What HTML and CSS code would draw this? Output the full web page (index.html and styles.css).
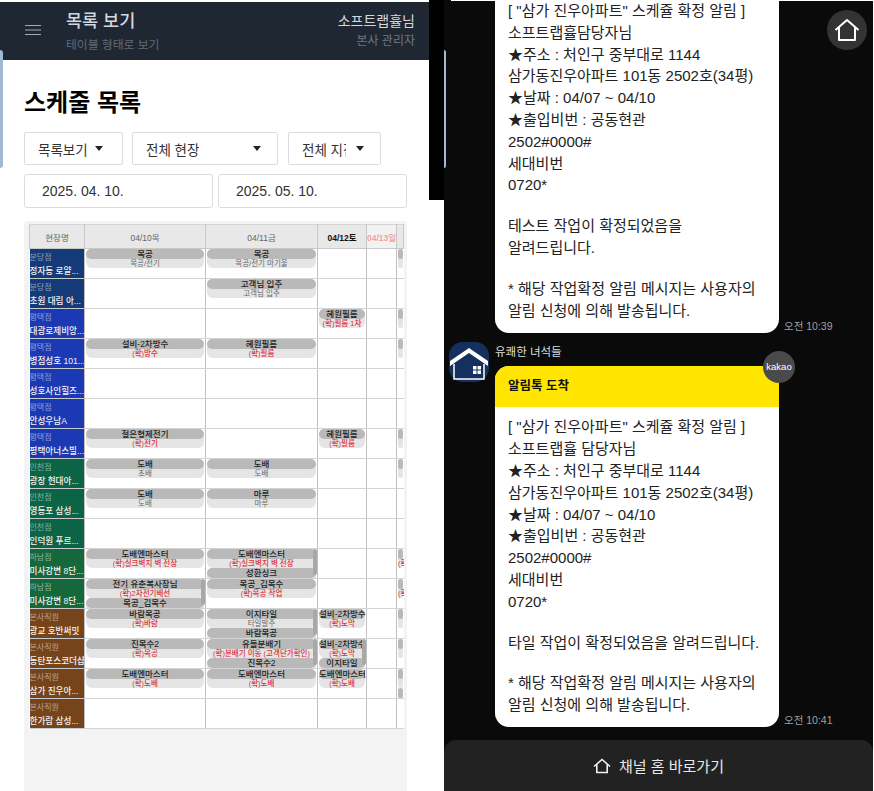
FILE: index.html
```html
<!DOCTYPE html>
<html lang="ko">
<head>
    <meta charset="UTF-8">
    <title>스케줄 목록</title>
    <link rel="stylesheet" href="styles.css">
</head>
<body>
    <div class="app">
        <span class="edge-bar"></span>
        <header class="top">
            <svg class="menu" width="16" height="10" viewBox="0 0 16 10"><path d="M0 .5h16M0 5h16M0 9.500h16" stroke="#a4abb6" stroke-width="1.200" fill="none"/></svg>
            <div class="top-title">
                <h1>목록 보기</h1>
                <p>테이블 형태로 보기</p>
            </div>
            <div class="top-user">
                <h2>소프트랩휼님</h2>
                <p>본사 관리자</p>
            </div>
        </header>
        <main class="content">
            <h2 class="page-title">스케줄 목록</h2>
            <div class="filters">
                <div class="select s1"><span>목록보기</span><i></i></div>
                <div class="select s2"><span>전체 현장</span><i></i></div>
                <div class="select s3"><span>전체 지점</span><i></i></div>
            </div>
            <div class="dates">
                <div class="date">2025. 04. 10.</div>
                <div class="date">2025. 05. 10.</div>
            </div>
            <div class="sheet">
                <table class="grid">
                    <colgroup><col class="c-name"><col class="c-a"><col class="c-b"><col class="c-c"><col class="c-d"><col class="c-e"></colgroup>
                    <thead>
                        <tr><th>현장명</th><th>04/10목</th><th>04/11금</th><th class="sat">04/12토</th><th class="sun">04/13일</th><th></th></tr>
                    </thead>
                    <tbody>
                        <tr>
                            <td class="site navy"><small>분당점</small><strong>정자동 로얄...</strong></td>
                            <td><div class="slot"><div class="ev"><b>목공</b><span>목공/전기</span></div></div></td>
                            <td><div class="slot"><div class="ev"><b>목공</b><span>목공/전기 마기울</span></div></div></td>
                            <td></td><td></td>
                            <td><div class="slot"><div class="ev"><b>&nbsp;</b><span>&nbsp;</span></div></div></td>
                        </tr>
                        <tr>
                            <td class="site navy"><small>분당점</small><strong>초원 대림 아...</strong></td>
                            <td></td>
                            <td><div class="slot"><div class="ev"><b>고객님 입주</b><span>고객님 입주</span></div></div></td>
                            <td></td><td></td><td></td>
                        </tr>
                        <tr>
                            <td class="site blue"><small>평택점</small><strong>대광로제비앙...</strong></td>
                            <td></td><td></td>
                            <td><div class="slot"><div class="ev"><b>혜원필름</b><span class="ok">(확)필름 1차</span></div></div></td>
                            <td></td>
                            <td><div class="slot"><div class="ev"><b>&nbsp;</b><span>&nbsp;</span></div></div></td>
                        </tr>
                        <tr>
                            <td class="site blue"><small>평택점</small><strong>병점성호 101...</strong></td>
                            <td><div class="slot"><div class="ev"><b>설비-2차방수</b><span class="ok">(확)방수</span></div></div></td>
                            <td><div class="slot"><div class="ev"><b>혜원필름</b><span class="ok">(확)필름</span></div></div></td>
                            <td></td><td></td>
                            <td><div class="slot"><div class="ev"><b>&nbsp;</b><span>&nbsp;</span></div></div></td>
                        </tr>
                        <tr>
                            <td class="site blue"><small>평택점</small><strong>성호사인힐즈...</strong></td>
                            <td></td><td></td><td></td><td></td><td></td>
                        </tr>
                        <tr>
                            <td class="site blue"><small>평택점</small><strong>안성우남A</strong></td>
                            <td></td><td></td><td></td><td></td><td></td>
                        </tr>
                        <tr>
                            <td class="site blue"><small>평택점</small><strong>평택아너스빌...</strong></td>
                            <td><div class="slot"><div class="ev"><b>절은형제전기</b><span class="ok">(확)전기</span></div></div></td>
                            <td></td>
                            <td><div class="slot"><div class="ev"><b>혜원필름</b><span class="ok">(확)필름</span></div></div></td>
                            <td></td>
                            <td><div class="slot"><div class="ev"><b>&nbsp;</b><span>&nbsp;</span></div></div></td>
                        </tr>
                        <tr>
                            <td class="site green"><small>인천점</small><strong>광장 현대아...</strong></td>
                            <td><div class="slot"><div class="ev"><b>도배</b><span>초배</span></div></div></td>
                            <td><div class="slot"><div class="ev"><b>도배</b><span>도배</span></div></div></td>
                            <td></td><td></td>
                            <td><div class="slot"><div class="ev"><b>&nbsp;</b><span>&nbsp;</span></div></div></td>
                        </tr>
                        <tr>
                            <td class="site green"><small>인천점</small><strong>영등포 삼성...</strong></td>
                            <td><div class="slot"><div class="ev"><b>도배</b><span>도배</span></div></div></td>
                            <td><div class="slot"><div class="ev"><b>마루</b><span>마루</span></div></div></td>
                            <td></td><td></td><td></td>
                        </tr>
                        <tr>
                            <td class="site green"><small>인천점</small><strong>인덕원 푸르...</strong></td>
                            <td></td><td></td><td></td><td></td><td></td>
                        </tr>
                        <tr>
                            <td class="site forest"><small>하남점</small><strong>미사강변 8단...</strong></td>
                            <td><div class="slot"><div class="ev"><b>도배엔마스터</b><span class="ok">(확)실크벽지 벽 전장</span></div></div></td>
                            <td><div class="slot more"><div class="ev"><b>도배엔마스터</b><span class="ok">(확)실크벽지 벽 전장</span></div><div class="ev"><b>성환싱크</b><span>&nbsp;</span></div></div></td>
                            <td></td><td></td>
                            <td><div class="slot"><div class="ev"><b>&nbsp;</b><span class="ok">(확)</span></div></div></td>
                        </tr>
                        <tr>
                            <td class="site forest"><small>하남점</small><strong>미사강변 8단...</strong></td>
                            <td><div class="slot more"><div class="ev"><b>전기 유춘복사장님</b><span class="ok">(확)2차전기배선</span></div><div class="ev"><b>목공_김목수</b><span>&nbsp;</span></div></div></td>
                            <td><div class="slot"><div class="ev"><b>목공_김목수</b><span class="ok">(확)목공 작업</span></div></div></td>
                            <td></td><td></td>
                            <td><div class="slot"><div class="ev"><b>&nbsp;</b><span class="ok">(확)</span></div></div></td>
                        </tr>
                        <tr>
                            <td class="site brown"><small>본사직원</small><strong>광교 호반써밋</strong></td>
                            <td><div class="slot"><div class="ev"><b>바람목공</b><span class="ok">(확)바람</span></div></div></td>
                            <td><div class="slot more"><div class="ev"><b>이지타일</b><span>타일발주</span></div><div class="ev"><b>바람목공</b><span>&nbsp;</span></div></div></td>
                            <td><div class="slot"><div class="ev"><b>설비-2차방수</b><span class="ok">(확)도막</span></div></div></td>
                            <td></td>
                            <td><div class="slot"><div class="ev"><b>&nbsp;</b><span>&nbsp;</span></div></div></td>
                        </tr>
                        <tr>
                            <td class="site brown"><small>본사직원</small><strong>동탄포스코더샵</strong></td>
                            <td><div class="slot"><div class="ev"><b>진목수2</b><span class="ok">(확)목공</span></div></div></td>
                            <td><div class="slot more"><div class="ev"><b>유들분배기</b><span class="ok">(확)분배기 이동 (고객단가확인)</span></div><div class="ev"><b>진목수2</b><span>&nbsp;</span></div></div></td>
                            <td><div class="slot more"><div class="ev"><b>설비-2차방수</b><span class="ok">(확)도막</span></div><div class="ev"><b>이지타일</b><span>&nbsp;</span></div></div></td>
                            <td></td>
                            <td><div class="slot"><div class="ev"><b>&nbsp;</b><span>&nbsp;</span></div></div></td>
                        </tr>
                        <tr>
                            <td class="site brown"><small>본사직원</small><strong>삼가 진우아...</strong></td>
                            <td><div class="slot"><div class="ev"><b>도배엔마스터</b><span class="ok">(확)도배</span></div></div></td>
                            <td><div class="slot"><div class="ev"><b>도배엔마스터</b><span class="ok">(확)도배</span></div></div></td>
                            <td><div class="slot"><div class="ev"><b>도배엔마스터</b><span class="ok">(확)도배</span></div></div></td>
                            <td></td>
                            <td><div class="slot"><div class="ev"><b>&nbsp;</b><span>&nbsp;</span></div><div class="ev"><b>&nbsp;</b><span>&nbsp;</span></div></div></td>
                        </tr>
                        <tr>
                            <td class="site brown"><small>본사직원</small><strong>한가람 삼성...</strong></td>
                            <td></td><td></td><td></td><td></td><td></td>
                        </tr>
                    </tbody>
                </table>
            </div>
        </main>
    </div>

    <div class="gutter"><div class="gutter-black"></div></div>

    <div class="chat">
        <span class="edge-bar thin"></span>
        <div class="chat-topline"></div>
        <button class="home-btn">
            <svg width="26" height="24" viewBox="0 0 26 24"><path d="M1.500 12 13 2l11.500 10M5 9.500V22h16V9.500" fill="none" stroke="#fff" stroke-width="2" stroke-linejoin="round"/></svg>
        </button>
        <div class="msg first">
            <div class="bubble">
                <div class="bubble-body">
                    <p>[ "삼가 진우아파트" 스케쥴 확정 알림 ]<br>소프트랩휼담당자님<br>★주소 : 처인구 중부대로 1144<br>삼가동진우아파트 101동 2502호(34평)<br>★날짜 : 04/07 ~ 04/10<br>★출입비번 : 공동현관<br>2502#0000#<br>세대비번<br>0720*</p>
                    <p>테스트 작업이 확정되었음을<br>알려드립니다.</p>
                    <p>* 해당 작업확정 알림 메시지는 사용자의<br>알림 신청에 의해 발송됩니다.</p>
                </div>
            </div>
            <time>오전 10:39</time>
        </div>
        <div class="sender">
            <svg class="avatar" width="40" height="40" viewBox="0 0 40 40">
                <rect width="40" height="40" rx="14" fill="#15305f"/>
                <path d="M1 19 20 6l19 13v5L20 11 1 24z" fill="#fff"/>
                <path d="M5 22v15h30V22" fill="none" stroke="#fff" stroke-width="1.500"/>
                <path d="M24 24h8v8h-8z" fill="#fff"/>
                <path d="M28 24v8M24 28h8" stroke="#15305f"/>
            </svg>
            <span>유쾌한 녀석들</span>
        </div>
        <div class="msg second">
            <div class="bubble">
                <div class="bubble-head">알림톡 도착</div>
                <span class="kakao">kakao</span>
                <div class="bubble-body">
                    <p>[ "삼가 진우아파트" 스케쥴 확정 알림 ]<br>소프트랩휼 담당자님<br>★주소 : 처인구 중부대로 1144<br>삼가동진우아파트 101동 2502호(34평)<br>★날짜 : 04/07 ~ 04/10<br>★출입비번 : 공동현관<br>2502#0000#<br>세대비번<br>0720*</p>
                    <p>타일 작업이 확정되었음을 알려드립니다.</p>
                    <p>* 해당 작업확정 알림 메시지는 사용자의<br>알림 신청에 의해 발송됩니다.</p>
                </div>
            </div>
            <time>오전 10:41</time>
        </div>
        <div class="channel-bar">
            <svg width="18" height="16" viewBox="0 0 18 16"><path d="M1 8.500 9 1.500l8 7M3.800 6.500V14.500h10.400V6.500" fill="none" stroke="#f0f0f0" stroke-width="1.600"/></svg>
            <span>채널 홈 바로가기</span>
        </div>
    </div>
</body>
</html>
```

FILE: styles.css
```css
*{
    box-sizing : border-box;
}
html, body{
    margin : 0;
    height : 100%;
}
body{
    display : flex;
    height : 791px;
    overflow : hidden;
    background : #fff;
    font-family : "Liberation Sans", "Noto Sans CJK KR", sans-serif;
}
h1, h2, p{
    margin : 0;
}

/* left phone */
.app{
    position : relative;
    width : 429px;
    height : 791px;
    padding-top : 2px;
    display : flex;
    flex-direction : column;
    background : #fff;
}
.edge-bar{
    position : absolute;
    left : 0;
    top : 50px;
    width : 3px;
    height : 118px;
    background : #a3b8d3;
    border-radius : 0 3px 3px 0;
}
.edge-bar.thin{
    top : 50px;
    width : 2px;
    background : #a3b8d3;
}
.top{
    height : 58px;
    flex : none;
    display : flex;
    align-items : flex-start;
    padding : 0 14px 0 25px;
    background : #1f2733;
}
.menu{
    margin-top : 23px;
    margin-right : 25px;
}
.top-title{
    flex : 1;
    padding-top : 7px;
}
.top-title h1{
    font-size : 17.500px;
    font-weight : 500;
    line-height : 24px;
    color : #d3d8df;
}
.top-title p{
    font-size : 11.800px;
    line-height : 18px;
    margin-top : 3px;
    color : #626b78;
}
.top-user{
    text-align : right;
    padding-top : 10px;
}
.top-user h2{
    font-size : 14px;
    font-weight : 400;
    line-height : 19px;
    color : #d3d8df;
}
.top-user p{
    font-size : 12px;
    line-height : 16px;
    margin-top : 2px;
    color : #6f7885;
}
.content{
    flex : 1;
    min-height : 0;
    display : flex;
    flex-direction : column;
    padding : 26px 22px 0 24px;
}
.page-title{
    font-size : 24px;
    font-weight : 700;
    line-height : 34px;
    color : #000;
}
.filters{
    display : flex;
    margin-top : 12px;
}
.select{
    height : 33px;
    display : flex;
    align-items : center;
    border : 1px solid #dcdcdc;
    border-radius : 2px;
    font-size : 13.500px;
    color : #333;
}
.select span{
    white-space : nowrap;
    overflow : hidden;
}
.select i{
    width : 0;
    height : 0;
    margin-left : auto;
    border-left : 4.500px solid transparent;
    border-right : 4.500px solid transparent;
    border-top : 5px solid #222;
}
.s1{
    width : 99px;
    padding : 0 19px 0 13px;
}
.s2{
    width : 146px;
    margin-left : 9px;
    padding : 0 16px 0 13px;
}
.s3{
    width : 93px;
    margin-left : 10px;
    padding : 0 16px 0 13px;
}
.s3 span{
    width : 44px;
}
.dates{
    display : flex;
    gap : 5px;
    margin-top : 9px;
}
.date{
    width : 189px;
    height : 34px;
    line-height : 32px;
    padding-left : 17px;
    border : 1px solid #dcdcdc;
    border-radius : 3px;
    font-size : 14px;
    color : #333;
}
.sheet{
    flex : 1;
    margin-top : 13px;
    padding : 3px 0 0 5px;
    background : #f3f3f3;
    border-radius : 4px 4px 0 0;
}

/* schedule table */
.grid{
    width : 374px;
    table-layout : fixed;
    border-collapse : collapse;
    background : #fff;
}
.c-name{ width : 55px; }
.c-a{ width : 121px; }
.c-b{ width : 112px; }
.c-c{ width : 49px; }
.c-d{ width : 30px; }
.c-e{ width : 7px; }
.grid th{
    height : 24px;
    padding : 0;
    background : #e8e8e8;
    border : 1px solid #c8c8c8;
    border-top : 1px solid #d4d4d4;
    font-size : 8.500px;
    font-weight : 400;
    color : #666;
    white-space : nowrap;
    overflow : hidden;
}
.grid th.sat{
    font-weight : 700;
    color : #111;
}
.grid th.sun{
    font-weight : 700;
    color : #f2a3a0;
    background : #f2f2f2;
}
.grid td{
    height : 30px;
    padding : 0;
    vertical-align : top;
    border-right : 1px solid #c0c0c0;
    border-bottom : 1px solid #d4d4d4;
    border-left : 1px solid #c0c0c0;
}
.grid td:last-child{
    border-right : 0;
}
.site{
    overflow : hidden;
    white-space : nowrap;
}
.grid td.site{
    border-left : 0;
    border-bottom : 1px solid #c8ccd0;
}
.site small{
    display : block;
    font-size : 8px;
    line-height : 10px;
    padding-top : 4px;
    color : rgba(255,255,255,.5);
}
.site strong{
    display : block;
    font-size : 8.600px;
    font-weight : 500;
    line-height : 12px;
    margin-top : 2px;
    color : #f2f2f2;
}
.navy{ background : #143b78; }
.blue{ background : #1a39b2; }
.green{ background : #0a6445; }
.forest{ background : #15683c; }
.brown{ background : #75441a; }
.slot{
    position : relative;
    height : 29px;
    overflow : hidden;
}
.slot.more::after{
    content : "";
    position : absolute;
    top : 0;
    right : 0;
    width : 4px;
    height : 26px;
    background : #a8a8a8;
    border-radius : 2px;
}
.ev{
    height : 19px;
    margin : 0 1px;
    background : #e5e5e5;
    border-radius : 6px;
    text-align : center;
    white-space : nowrap;
}
.ev b{
    display : block;
    height : 10px;
    background : #b9b9b9;
    border-radius : 6px;
    font-size : 8.500px;
    font-weight : 500;
    line-height : 10px;
    color : #1c1c1c;
}
.ev span{
    display : block;
    height : 9px;
    font-size : 7.500px;
    line-height : 9px;
    color : #6a6a6a;
}
.ev span.ok{
    font-weight : 500;
    color : #e02f3b;
}

/* between the two phones */
.gutter{
    width : 15px;
    flex : none;
    background : #fff;
}
.gutter-black{
    height : 200px;
    background : #000;
}

/* chat phone */
.chat{
    position : relative;
    width : 429px;
    height : 791px;
    flex : none;
    display : flex;
    flex-direction : column;
    background : #0a0a0a;
}
.chat-topline{
    position : relative;
    z-index : 1;
    height : 1px;
    margin-left : 7px;
    background : #fff;
    flex : none;
}
.home-btn{
    position : absolute;
    right : 6px;
    top : 10px;
    width : 40px;
    height : 40px;
    padding : 0;
    border : 0;
    border-radius : 50%;
    display : flex;
    align-items : center;
    justify-content : center;
    background : #333;
}
.msg{
    display : flex;
    align-items : flex-end;
    padding-left : 51px;
}
.msg.first{
    margin-top : -1px;
}
.bubble{
    position : relative;
    width : 284px;
    background : #fff;
    border-radius : 14px;
}
.msg.first .bubble{
    border-radius : 0 0 14px 14px;
}
.bubble-body{
    padding : 0 12px 12px 13px;
    font-size : 15px;
    line-height : 21.800px;
    color : #222;
}
.bubble-body p + p{
    margin-top : 19px;
}
.msg.second .bubble-body{
    padding-top : 9px;
    padding-bottom : 11px;
}
.bubble-head{
    height : 41px;
    line-height : 41px;
    padding-left : 13px;
    background : #ffe500;
    border-radius : 14px 14px 0 0;
    font-size : 12.500px;
    font-weight : 700;
    color : #111;
}
.kakao{
    position : absolute;
    right : -16px;
    top : -15px;
    width : 32px;
    height : 32px;
    line-height : 32px;
    border-radius : 50%;
    background : #4a4a4a;
    text-align : center;
    font-size : 9.500px;
    color : #fff;
}
.msg time{
    margin-left : 5px;
    font-size : 10.500px;
    line-height : 14px;
    color : #a0a0a0;
}
.sender{
    display : flex;
    align-items : flex-start;
    height : 24px;
    margin-top : 9px;
    padding-left : 5px;
}
.avatar{
    flex : none;
    margin-right : 6px;
}
.sender span{
    margin-top : 2px;
    font-size : 11.500px;
    line-height : 17px;
    color : #ddd;
}
.channel-bar{
    margin-top : auto;
    height : 51px;
    display : flex;
    align-items : center;
    justify-content : center;
    gap : 8px;
    background : #222;
    border-radius : 12px 12px 0 0;
    font-size : 15px;
    color : #e8e8e8;
}
```
